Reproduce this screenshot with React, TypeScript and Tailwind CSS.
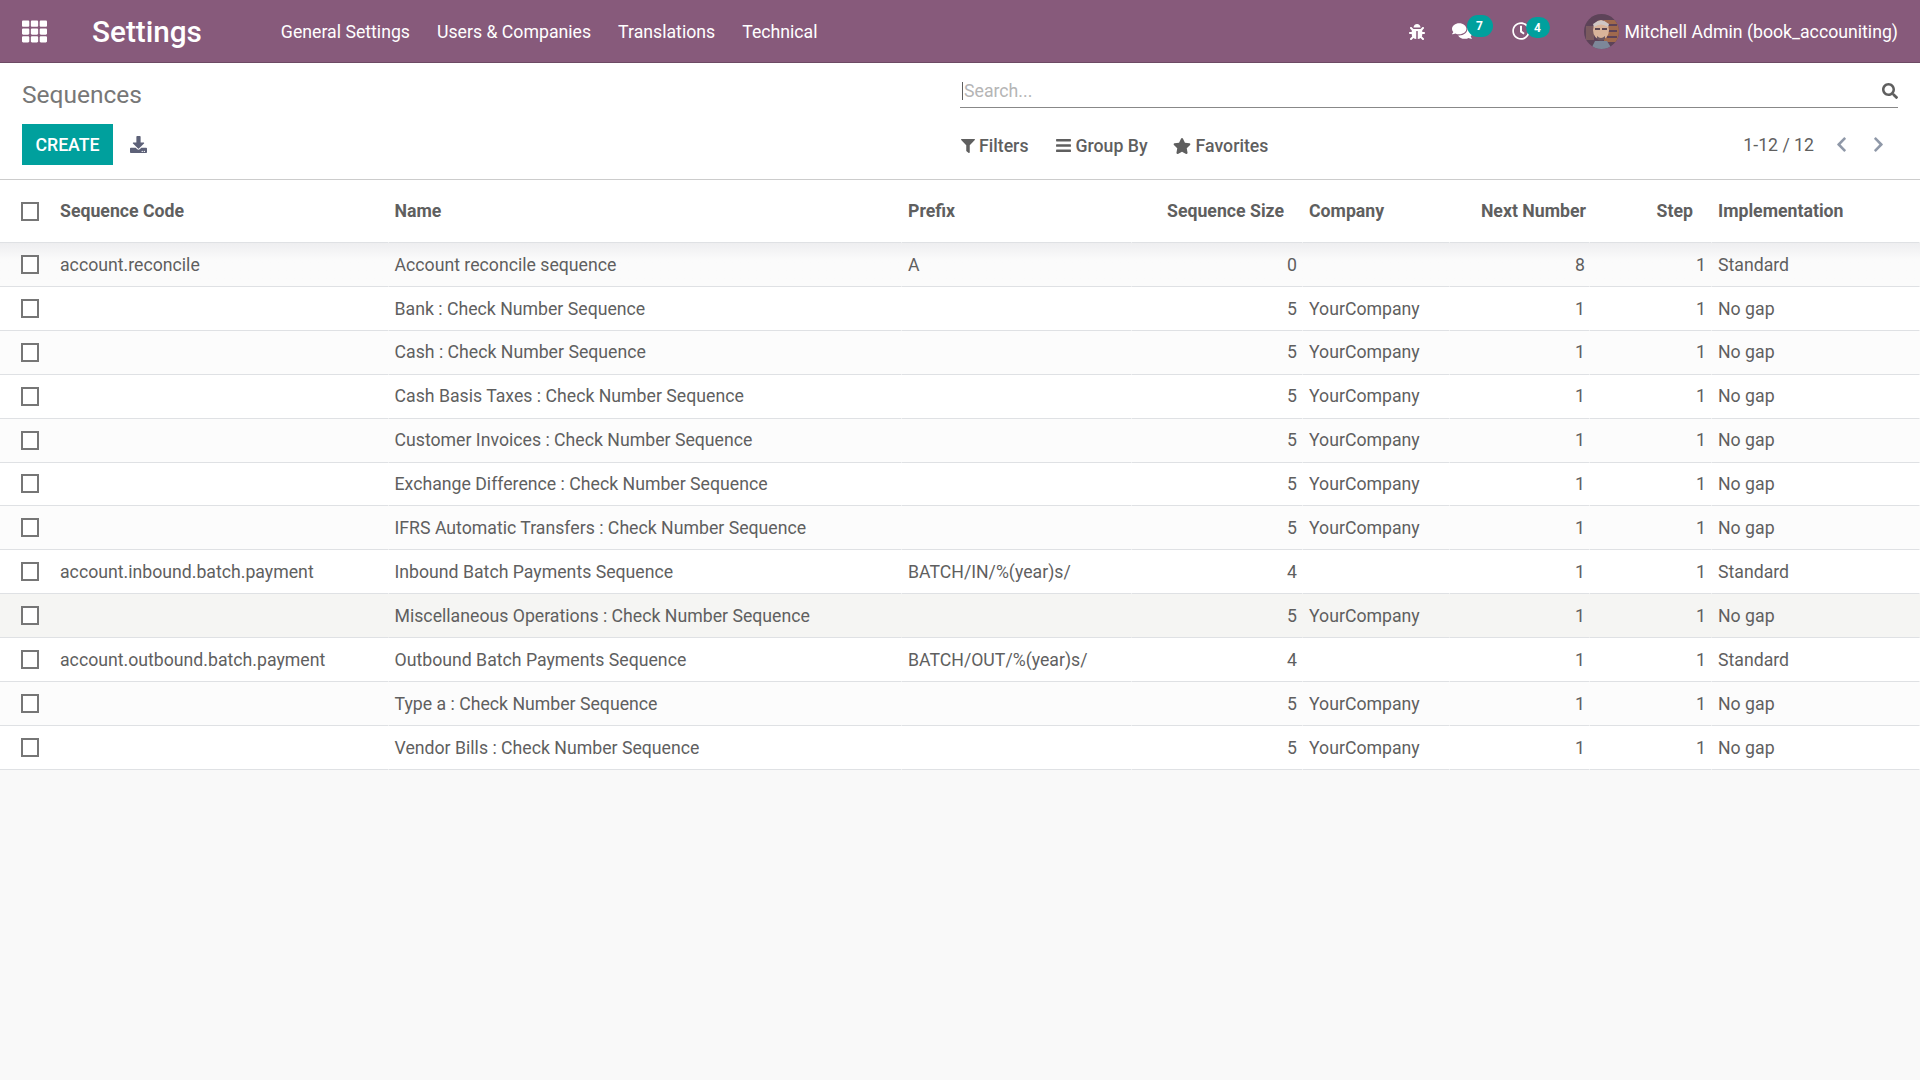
import { FaBars, FaBug, FaChevronLeft, FaChevronRight, FaComments, FaDownload, FaFilter, FaRegClock, FaSearch, FaStar, FaTh } from "react-icons/fa";

const navLinks = ["General Settings", "Users & Companies", "Translations", "Technical"];

const sequences = [
  { code: "account.reconcile", name: "Account reconcile sequence", prefix: "A", size: 0, company: "", next: 8, impl: "Standard" },
  { code: "", name: "Bank : Check Number Sequence", prefix: "", size: 5, company: "YourCompany", next: 1, impl: "No gap" },
  { code: "", name: "Cash : Check Number Sequence", prefix: "", size: 5, company: "YourCompany", next: 1, impl: "No gap" },
  { code: "", name: "Cash Basis Taxes : Check Number Sequence", prefix: "", size: 5, company: "YourCompany", next: 1, impl: "No gap" },
  { code: "", name: "Customer Invoices : Check Number Sequence", prefix: "", size: 5, company: "YourCompany", next: 1, impl: "No gap" },
  { code: "", name: "Exchange Difference : Check Number Sequence", prefix: "", size: 5, company: "YourCompany", next: 1, impl: "No gap" },
  { code: "", name: "IFRS Automatic Transfers : Check Number Sequence", prefix: "", size: 5, company: "YourCompany", next: 1, impl: "No gap" },
  { code: "account.inbound.batch.payment", name: "Inbound Batch Payments Sequence", prefix: "BATCH/IN/%(year)s/", size: 4, company: "", next: 1, impl: "Standard" },
  { code: "", name: "Miscellaneous Operations : Check Number Sequence", prefix: "", size: 5, company: "YourCompany", next: 1, impl: "No gap" },
  { code: "account.outbound.batch.payment", name: "Outbound Batch Payments Sequence", prefix: "BATCH/OUT/%(year)s/", size: 4, company: "", next: 1, impl: "Standard" },
  { code: "", name: "Type a : Check Number Sequence", prefix: "", size: 5, company: "YourCompany", next: 1, impl: "No gap" },
  { code: "", name: "Vendor Bills : Check Number Sequence", prefix: "", size: 5, company: "YourCompany", next: 1, impl: "No gap" },
];

const Checkbox = () => (
  <input type="checkbox" className="block appearance-none w-[18px] h-[19px] ml-[21px] border-2 border-[#767676] bg-white" />
);

const Avatar = () => (
  <svg viewBox="0 0 35 35" className="w-[35px] h-[35px] shrink-0 rounded-full">
    <rect width="35" height="35" fill="#5d4358" />
    <rect x="20" y="6" width="15" height="22" fill="#a0694d" />
    <rect x="23" y="10" width="10" height="2" fill="#5d4358" />
    <rect x="23" y="16" width="10" height="2" fill="#5d4358" />
    <rect x="23" y="22" width="10" height="2" fill="#5d4358" />
    <rect x="2" y="12" width="8" height="14" fill="#7a5a5f" />
    <ellipse cx="17" cy="16" rx="8" ry="10" fill="#d9b49a" />
    <path d="M9 10 Q17 3 25 10 L24 13 Q17 8 10 13 Z" fill="#cfc7c4" />
    <rect x="11" y="14" width="5" height="2" fill="#5a4650" />
    <rect x="18" y="14" width="5" height="2" fill="#5a4650" />
    <path d="M13 22 Q17 26 21 22 L21 25 Q17 28 13 25 Z" fill="#6b5760" />
    <path d="M7 35 L11 27 L23 27 L28 35 Z" fill="#7d8799" />
  </svg>
);

const NotifyBadge = ({ className, children }: { className: string; children: string }) => (
  <span className={`absolute flex items-center justify-center rounded-full bg-[#00A09D] text-white text-[12px] font-bold ${className}`}>
    {children}
  </span>
);

const cellClass = "px-[6px] pt-[1px] border-b border-b-[#dfe1e4] border-r border-r-transparent align-middle";

export default function App() {
  return (
    <div className="flex flex-col min-h-screen bg-[#f9f9f9] text-[#5f5f5f] text-[17.7px] font-['Roboto',sans-serif]">
      <header className="flex items-center h-[63px] bg-[#875A7B] border-b border-[#6d4a64] text-white">
        <FaTh className="w-[25px] h-[25px] ml-[22px] shrink-0" />
        <span className="ml-[45px] pt-[1px] text-[29.7px] leading-none font-medium">Settings</span>
        <nav className="flex gap-[27px] ml-[79px] pt-[2px]">
          {navLinks.map((link) => (
            <a key={link}>{link}</a>
          ))}
        </nav>
        <div className="flex items-center ml-auto mr-[22px]">
          <FaBug className="w-[16px] h-[16px] mt-[1px]" />
          <div className="relative ml-[27px]">
            <FaComments className="w-[20px] h-[20px]" />
            <NotifyBadge className="w-[26px] h-[22px] left-[15px] top-[-6px]">7</NotifyBadge>
          </div>
          <div className="relative ml-[40px]">
            <FaRegClock className="w-[18px] h-[18px]" />
            <NotifyBadge className="w-[24px] h-[21px] left-[14px] top-[-5px]">4</NotifyBadge>
          </div>
          <div className="ml-[54px]">
            <Avatar />
          </div>
          <span className="ml-[6px] pt-[2px]">Mitchell Admin (book_accouniting)</span>
        </div>
      </header>

      <div className="h-[117px] bg-white border-b border-[#cccccc] px-[22px]">
        <div className="flex items-start h-[61px]">
          <h1 className="w-[938px] pt-[17px] text-[24.5px] leading-[30px] text-[#777777]">Sequences</h1>
          <div className="flex items-center justify-between w-[938px] h-[45px] pt-[12px] border-b border-[#888888]">
            <span className="ml-[2px] pl-[1px] border-l border-[#5f5f5f] leading-[18px] text-[#b5b5b5]">Search...</span>
            <FaSearch className="w-[16px] h-[16px] text-[#5f5f5f]" />
          </div>
        </div>
        <div className="flex items-center">
          <div className="flex items-center w-[938px]">
            <button className="w-[91px] h-[41px] pt-[1px] bg-[#00A09D] text-white font-medium">CREATE</button>
            <FaDownload className="w-[17px] h-[17px] ml-[17px] text-[#5d6178]" />
          </div>
          <div className="flex items-center pt-[3px]">
            <FaFilter className="w-[14px] h-[14px] ml-[1px] mr-[4px]" />
            <span className="font-medium">Filters</span>
            <FaBars className="w-[17px] h-[17px] ml-[27px] mr-[3px]" />
            <span className="font-medium">Group By</span>
            <FaStar className="w-[18px] h-[18px] ml-[25px] mr-[5px]" />
            <span className="font-medium">Favorites</span>
          </div>
          <div className="flex items-center ml-auto pr-[12px]">
            <span className="pt-[1px]">1-12 / 12</span>
            <FaChevronLeft className="w-[15px] h-[17px] ml-[20px] text-[#8f98a8]" />
            <FaChevronRight className="w-[15px] h-[17px] ml-[22px] text-[#8f98a8]" />
          </div>
        </div>
      </div>

      <table className="w-full table-fixed border-separate border-spacing-0">
        <colgroup>
          <col className="w-[54px]" />
          <col className="w-[335px]" />
          <col className="w-[513px]" />
          <col className="w-[230px]" />
          <col className="w-[171px]" />
          <col className="w-[147px]" />
          <col className="w-[140px]" />
          <col className="w-[122px]" />
          <col />
        </colgroup>
        <thead className="bg-white font-bold">
          <tr className="h-[63px] text-left">
            <th className="border-b border-b-[#dfe1e4]">
              <Checkbox />
            </th>
            <th className={cellClass}>Sequence Code</th>
            <th className={`${cellClass} pl-[5.5px]`}>Name</th>
            <th className={cellClass}>Prefix</th>
            <th className={`${cellClass} text-right pr-[18px]`}>Sequence Size</th>
            <th className={cellClass}>Company</th>
            <th className={`${cellClass} text-right pr-[3px]`}>Next Number</th>
            <th className={`${cellClass} text-right pr-[18px]`}>Step</th>
            <th className={cellClass}>Implementation</th>
          </tr>
        </thead>
        <tbody>
          {sequences.map((row, i) => (
            <tr
              key={row.name}
              className={`h-[43.92px] ${
                i === 0
                  ? "bg-linear-to-b from-[#eeeef0] to-[#fbfbfb] to-40%"
                  : i === 8
                    ? "bg-[#f5f5f3]"
                    : i % 2 === 0
                      ? "bg-[#fcfcfc]"
                      : "bg-white"
              }`}
            >
              <td className="border-b border-b-[#dfe1e4] align-middle">
                <Checkbox />
              </td>
              <td className={cellClass}>{row.code}</td>
              <td className={`${cellClass} pl-[5.5px]`}>{row.name}</td>
              <td className={cellClass}>{row.prefix}</td>
              <td className={`${cellClass} text-right pr-[5px]`}>{row.size}</td>
              <td className={cellClass}>{row.company}</td>
              <td className={`${cellClass} text-right pr-[4px]`}>{row.next}</td>
              <td className={`${cellClass} text-right pr-[5px]`}>1</td>
              <td className={cellClass}>{row.impl}</td>
            </tr>
          ))}
        </tbody>
      </table>
    </div>
  );
}
